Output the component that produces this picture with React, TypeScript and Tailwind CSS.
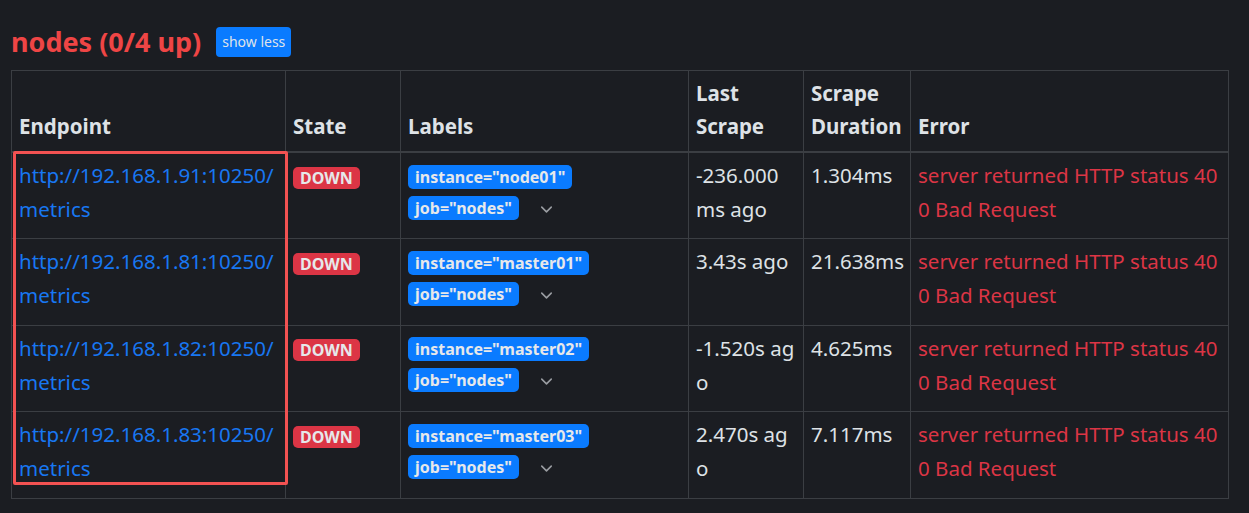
import { ChevronDown } from 'lucide-react';

type Target = {
	host: string;
	instance: string;
	lastScrape: [string, string?];
	duration: string;
};

const targets: Target[] = [
	{ host: '192.168.1.91', instance: 'node01', lastScrape: ['-236.000', 'ms ago'], duration: '1.304ms' },
	{ host: '192.168.1.81', instance: 'master01', lastScrape: ['3.43s ago'], duration: '21.638ms' },
	{ host: '192.168.1.82', instance: 'master02', lastScrape: ['-1.520s ag', 'o'], duration: '4.625ms' },
	{ host: '192.168.1.83', instance: 'master03', lastScrape: ['2.470s ag', 'o'], duration: '7.117ms' },
];

const Badge = ({ children, color }: { children: React.ReactNode; color: string }) => (
	<span
		className={`inline-block rounded-[5px] px-[7px] text-[16px] leading-[24px] font-bold text-[#e6e8ea] align-middle ${color}`}
	>
		{children}
	</span>
);

const cell = 'border border-[#3b3e43] px-[7px] pt-[5px] pb-[11px] align-top';

export default function App() {
	return (
		<div
			className="min-h-[513px] bg-[#1b1d22] pl-[11px] pt-[24px] text-[#dee2e6]"
			style={{ fontFamily: '"Noto Sans", "Open Sans", sans-serif' }}
		>
			<div className="flex items-center gap-[15px] h-[36px]">
				<h2 className="text-[27px] font-bold text-[#ef4545] leading-[34px]">nodes (0/4 up)</h2>
				<button className="h-[30px] px-[6px] rounded-[4px] bg-[#0a7bff] text-[14px] text-[#dfe3ea] leading-[30px]">
					show less
				</button>
			</div>

			<div className="relative mt-[10px] w-[1217px]">
				<table className="w-full table-fixed border-collapse text-[20.5px]">
					<colgroup>
						<col className="w-[274px]" />
						<col className="w-[115px]" />
						<col className="w-[288px]" />
						<col className="w-[115px]" />
						<col className="w-[107px]" />
						<col className="w-[318px]" />
					</colgroup>
					<thead>
						<tr className="border-b-2 border-[#3b3e43]">
							{['Endpoint', 'State', 'Labels', 'Last Scrape', 'Scrape Duration', 'Error'].map((h) => (
								<th
									key={h}
									className="border border-[#3b3e43] px-[7px] pt-[6px] pb-[8px] text-left align-bottom font-bold leading-[33px] h-[80px]"
								>
									{h === 'Last Scrape' ? (
										<>Last<br />Scrape</>
									) : h === 'Scrape Duration' ? (
										<>Scrape<br />Duration</>
									) : (
										h
									)}
								</th>
							))}
						</tr>
					</thead>
					<tbody>
						{targets.map((t) => (
							<tr key={t.host} className="h-[86.5px]">
								<td className={`${cell} leading-[34px]`}>
									<a className="text-[#1877f2]">
										http://{t.host}:10250/
										<br />
										metrics
									</a>
								</td>
								<td className={`${cell} leading-[34px]`}>
									<span className="inline-block rounded-[5px] px-[7px] bg-[#dc3545] text-[16px] leading-[22px] font-bold text-[#e6e8ea] align-middle">
										DOWN
									</span>
								</td>
								<td className={`${cell} leading-[33px]`}>
									<div>
										<Badge color="bg-[#0a7bff]">instance="{t.instance}"</Badge>
									</div>
									<div className="flex items-center h-[33px]">
										<Badge color="bg-[#0a7bff]">job="nodes"</Badge>
										<ChevronDown className="ml-[18px] mt-[3px] text-[#9a9da2]" size={19} strokeWidth={2} />
									</div>
								</td>
								<td className={`${cell} leading-[34px]`}>
									{t.lastScrape[0]}
									{t.lastScrape[1] && (
										<>
											<br />
											{t.lastScrape[1]}
										</>
									)}
								</td>
								<td className={`${cell} leading-[34px]`}>{t.duration}</td>
								<td className={`${cell} leading-[34px] text-[#dc3545]`}>
									server returned HTTP status 40
									<br />
									0 Bad Request
								</td>
							</tr>
						))}
					</tbody>
				</table>

				{/* highlight box */}
				<div className="absolute left-[2px] top-[81px] w-[275px] h-[334px] border-[3px] border-[#f25252] rounded-[2px] pointer-events-none" />
			</div>
		</div>
	);
}
